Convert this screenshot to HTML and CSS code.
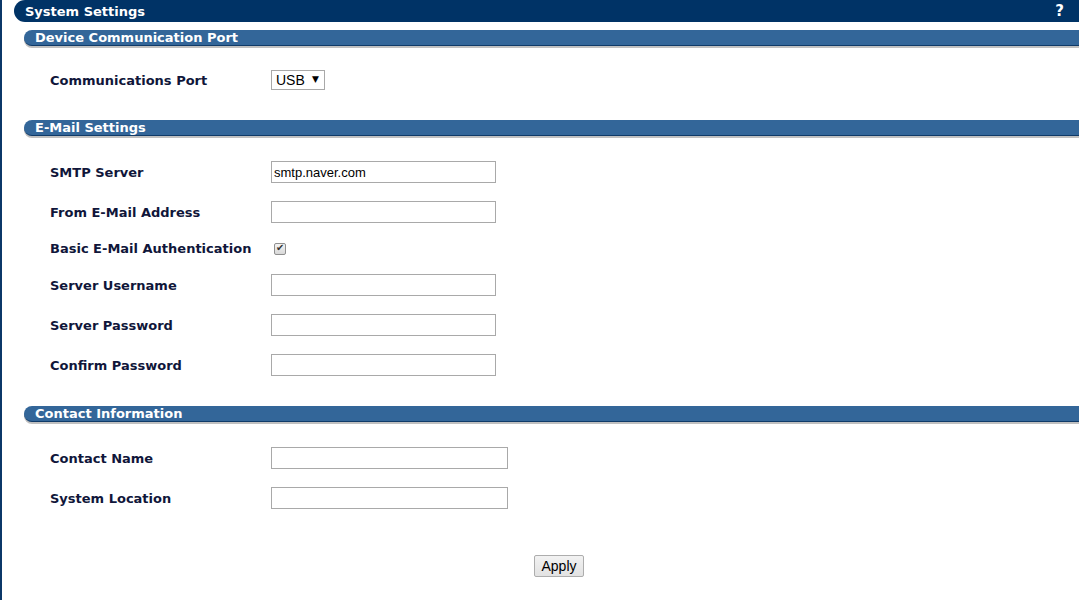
FILE: index.html
```html
<!DOCTYPE html>
<html lang="en">
<head>
    <meta charset="UTF-8">
    <title>System Settings</title>
    <link rel="stylesheet" href="styles.css">
</head>
<body>
    <div class="page">
        <div class="titleBar">
            <span>System Settings</span>
            <span class="help">?</span>
        </div>

        <div class="section">
            <div class="sectionHeader">Device Communication Port</div>
            <div class="sectionBody first">
                <div class="row">
                    <label>Communications Port</label>
                    <span class="selectWrap">
                        <select>
                            <option>USB</option>
                        </select>
                    </span>
                </div>
            </div>
        </div>

        <div class="section">
            <div class="sectionHeader">E-Mail Settings</div>
            <div class="sectionBody mail">
                <div class="row">
                    <label>SMTP Server</label>
                    <input type="text" class="field" value="smtp.naver.com">
                </div>
                <div class="row">
                    <label>From E-Mail Address</label>
                    <input type="text" class="field">
                </div>
                <div class="row short">
                    <label>Basic E-Mail Authentication</label>
                    <input type="checkbox" class="check" checked>
                </div>
                <div class="row">
                    <label>Server Username</label>
                    <input type="text" class="field">
                </div>
                <div class="row">
                    <label>Server Password</label>
                    <input type="password" class="field">
                </div>
                <div class="row">
                    <label>Confirm Password</label>
                    <input type="password" class="field">
                </div>
            </div>
        </div>

        <div class="section">
            <div class="sectionHeader">Contact Information</div>
            <div class="sectionBody">
                <div class="row">
                    <label>Contact Name</label>
                    <input type="text" class="field wide">
                </div>
                <div class="row">
                    <label>System Location</label>
                    <input type="text" class="field wide">
                </div>
            </div>
        </div>

        <div class="actions">
            <button class="applyButton">Apply</button>
        </div>
    </div>
</body>
</html>
```

FILE: styles.css
```css
body {
    margin: 0;
    font-family: "DejaVu Sans", Verdana, sans-serif;
    background: #fff;
}

.page {
    border-left: 2px solid #0b3768;
    min-height: 600px;
    box-sizing: border-box;
    padding-left: 12px;
}

.titleBar {
    display: flex;
    justify-content: space-between;
    align-items: center;
    height: 22px;
    background-color: #003366;
    border-radius: 11px 0 0 11px;
    color: #fff;
    font-weight: bold;
    font-size: 13px;
    padding: 0 15px 0 11px;
}

.help {
    font-size: 15px;
}

.section {
    margin-left: 10px;
}

.sectionHeader {
    margin-top: 8px;
    height: 15px;
    line-height: 15px;
    background-color: #336699;
    border-bottom: 1px solid #0f3a68;
    box-shadow: 0 2px 0 #c0c0c0;
    border-radius: 8px 0 0 8px;
    color: #fff;
    font-weight: bold;
    font-size: 13px;
    padding-left: 11px;
}

.sectionBody {
    padding: 16px 0 14px 26px;
}

.sectionBody.first {
    padding-top: 14px;
    padding-bottom: 12px;
}

.sectionBody.mail {
    padding-bottom: 13px;
}

.row {
    display: grid;
    grid-template-columns: 221px auto;
    align-items: center;
    justify-items: start;
    height: 40px;
}

.row.short {
    height: 33px;
}

.row label {
    font-weight: bold;
    font-size: 13px;
    color: #10163a;
}

.field {
    width: 225px;
    height: 22px;
    box-sizing: border-box;
    border: 1px solid #a9a9a9;
    padding: 1px 2px;
    font-family: "Liberation Sans", Arial, sans-serif;
    font-size: 13px;
    color: #000;
}

.field.wide {
    width: 237px;
}

.selectWrap {
    position: relative;
    display: inline-block;
}

.selectWrap select {
    appearance: none;
    width: 54px;
    height: 20px;
    border: 1px solid #a9a9a9;
    background: #fff;
    font-family: "Liberation Sans", Arial, sans-serif;
    font-size: 14px;
    padding: 0 0 0 4px;
    color: #000;
}

.selectWrap::after {
    content: "\25BC";
    position: absolute;
    right: 6px;
    top: 4px;
    font-size: 9px;
    color: #000;
    pointer-events: none;
}

.check {
    appearance: none;
    margin: 0 0 0 3px;
    width: 12px;
    height: 12px;
    border: 1px solid #8f8f8f;
    border-radius: 2px;
    background: linear-gradient(#f4f4f4, #d8d8d8);
    position: relative;
}

.check:checked::after {
    content: "\2714";
    position: absolute;
    left: 1px;
    top: -2px;
    font-size: 10px;
    color: #333;
}

.actions {
    display: flex;
    justify-content: center;
    padding-top: 23px;
}

.applyButton {
    margin-left: 25px;
    height: 22px;
    padding: 0 6px;
    border: 1px solid #adadad;
    border-radius: 2px;
    background: linear-gradient(#f2f2f2, #e2e2e2);
    font-family: "Liberation Sans", Arial, sans-serif;
    font-size: 14px;
    color: #000;
}
```
